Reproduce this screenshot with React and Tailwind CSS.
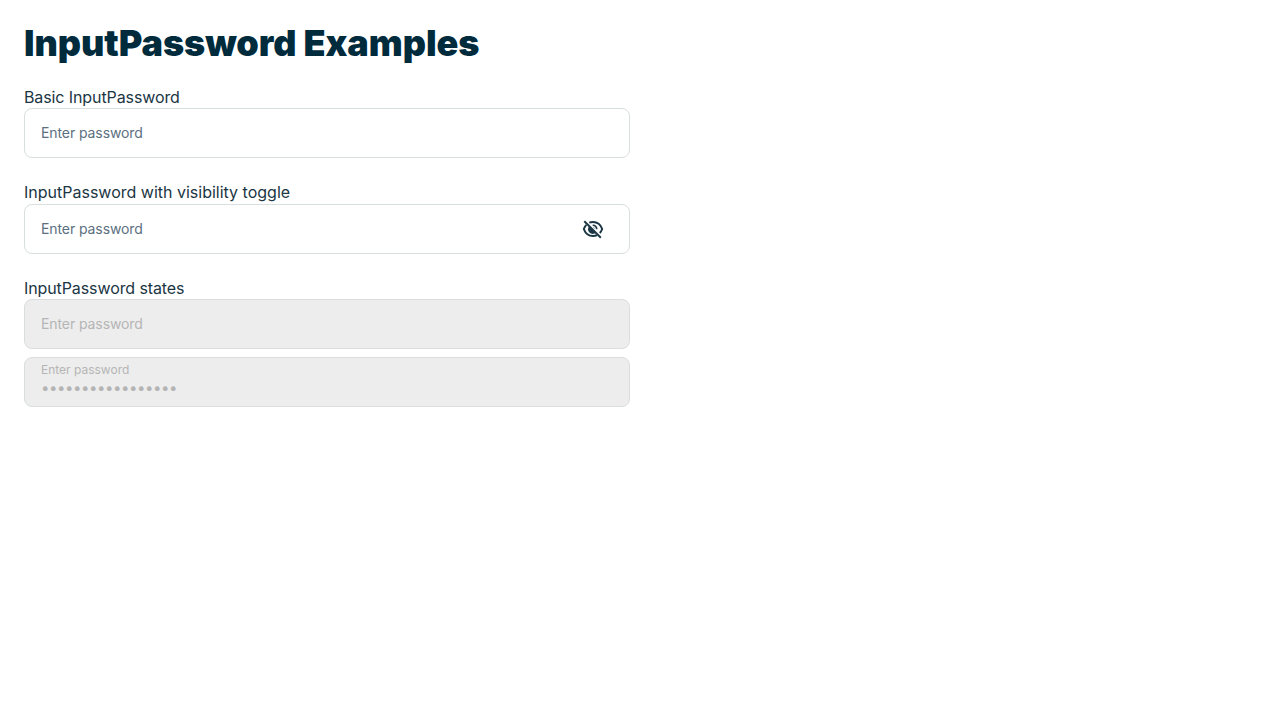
function EyeOffIcon() {
  return (
    <svg width="24" height="24" viewBox="0 0 24 24" fill="none" stroke="currentColor" strokeWidth="2">
      <path d="M8.3 5.7C9.4 5.2 10.7 5 12 5c4.200 0 7.500 2.300 9.200 7-.6 1.600-1.400 2.900-2.400 4" />
      <path d="M5.300 7.900C4.200 9 3.400 10.400 2.800 12c1.700 4.700 5 7 9.200 7 1.500 0 2.800-.3 4-.9" />
      <path d="M8.400 8.900a4.500 4.500 0 0 0 6.700 6.700z" fill="currentColor" stroke="none" />
      <path d="M11.700 8.300a3.800 3.800 0 0 1 4 4" strokeWidth="1.600" />
      <path d="M11.900 10.200a2 2 0 0 1 1.900 1.900z" fill="currentColor" stroke="none" />
      <path d="M3.300 4.300 19.800 20.700" />
    </svg>
  );
}

function Field({ children, disabled }) {
  const look = disabled
    ? "border-[#d9dddd] bg-[#ededed] text-[#b5b5b5]"
    : "border-[#d9dedf] bg-white text-[#5b7080]";
  return (
    <div className={`flex h-[50px] items-center rounded-lg border px-4 text-sm ${look}`}>
      {children}
    </div>
  );
}

function Placeholder() {
  return <span className="flex-1 tracking-[-0.09px]">Enter password</span>;
}

function Section({ title, tracking, children }) {
  return (
    <section className="mb-6">
      <div className={`h-[21.5px] text-base leading-[21.5px] ${tracking}`}>{title}</div>
      <div className="flex flex-col gap-2">{children}</div>
    </section>
  );
}

export default function App() {
  return (
    <main className="w-[654px] px-6 pt-5 font-['Inter',sans-serif] text-[#1b3644]">
      <h1 className="mb-[19.5px] text-4xl leading-[47px] font-black tracking-[-0.045px] text-[#002b3d]">
        InputPassword Examples
      </h1>
      <Section title="Basic InputPassword" tracking="tracking-[-0.1px]">
        <Field>
          <Placeholder />
        </Field>
      </Section>
      <Section title="InputPassword with visibility toggle" tracking="tracking-normal">
        <Field>
          <Placeholder />
          <button aria-label="Show password" className="mr-2 text-[#1b3644]">
            <EyeOffIcon />
          </button>
        </Field>
      </Section>
      <Section title="InputPassword states" tracking="tracking-[-0.1px]">
        <Field disabled>
          <Placeholder />
        </Field>
        <Field disabled>
          <div className="flex flex-col pb-1">
            <label className="text-xs leading-4">Enter password</label>
            <input
              type="password"
              disabled
              defaultValue="12345678901234567"
              aria-label="Enter password"
              className="h-5 w-[400px] bg-transparent p-0 text-[15px] leading-5 tracking-[-0.44px] text-[#b5b5b5]"
            />
          </div>
        </Field>
      </Section>
    </main>
  );
}
